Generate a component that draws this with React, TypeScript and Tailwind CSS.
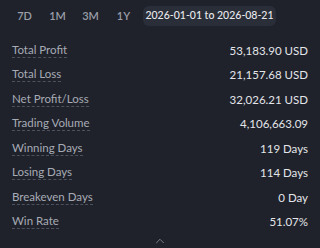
import { ChevronUp } from "lucide-react";

const RANGES = ["7D", "1M", "3M", "1Y"];

const STATS = [
  { label: "Total Profit", value: "53,183.90 USD" },
  { label: "Total Loss", value: "21,157.68 USD" },
  { label: "Net Profit/Loss", value: "32,026.21 USD" },
  { label: "Trading Volume", value: "4,106,663.09" },
  { label: "Winning Days", value: "119 Days" },
  { label: "Losing Days", value: "114 Days" },
  { label: "Breakeven Days", value: "0 Day" },
  { label: "Win Rate", value: "51.07%" },
];

export default function App() {
  return (
    <div className="relative h-[248px] w-[320px] overflow-hidden bg-[#1f222b] font-['Lato','Liberation_Sans',sans-serif]">
      {/* Plages de dates */}
      <div className="flex items-center pl-[8px] pt-[6px]">
        {RANGES.map((r) => (
          <button
            key={r}
            className="h-5 w-[33px] text-[11px] font-semibold text-[#9a9ea8]"
          >
            {r}
          </button>
        ))}
        <button className="ml-[3px] h-5 w-[133px] rounded-md bg-[#2a2e38] text-[10.5px] font-medium text-[#e9eaee]">
          2026-01-01 to 2026-08-21
        </button>
      </div>

      {/* Statistiques */}
      <div className="mt-[12px] px-3">
        {STATS.map((s) => (
          <div
            key={s.label}
            className="flex h-[24.5px] items-center justify-between text-[11.5px]"
          >
            <span className="border-b border-dashed border-[#4c515c] leading-[14px] text-[#a7abb5]">
              {s.label}
            </span>
            <span className="text-[#e3e5e9]">{s.value}</span>
          </div>
        ))}
      </div>

      <ChevronUp
        className="absolute left-[153px] top-[234px] h-[14px] w-[14px] text-[#80848e]"
        strokeWidth={1.6}
      />
    </div>
  );
}
